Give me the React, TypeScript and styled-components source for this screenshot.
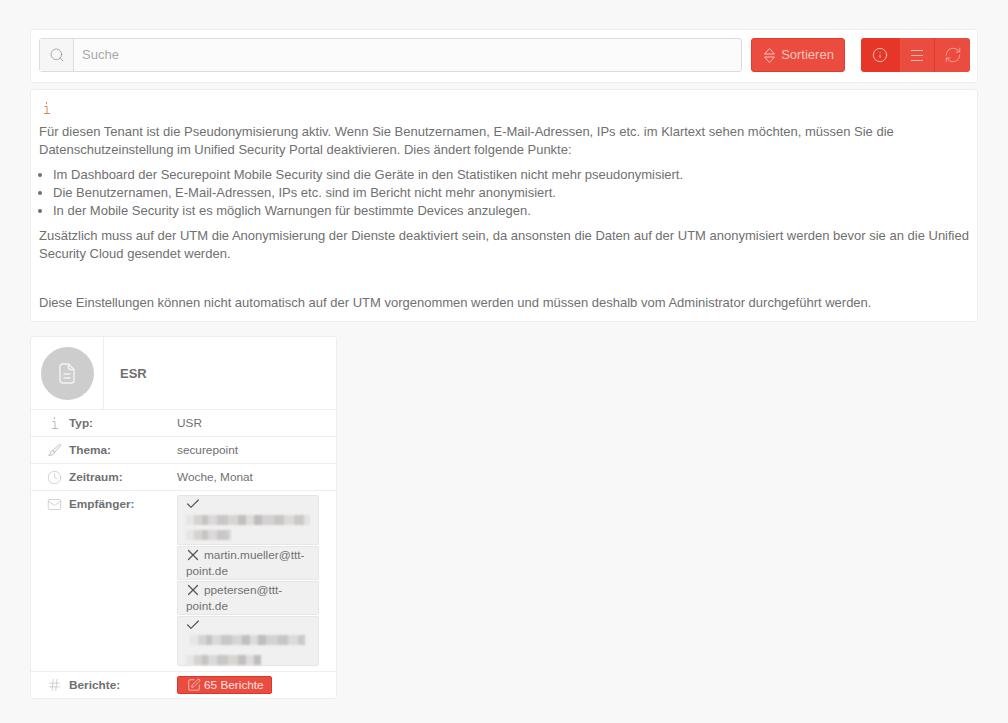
import React from "react";
import styled, { createGlobalStyle } from "styled-components";
import { Check, Clock, Hash, Info, Mail, RefreshCw, Search, SquarePen, X } from "lucide-react";

const GlobalStyle = createGlobalStyle`
  body {
    margin: 0;
    background: #f8f8f8;
    color: #707070;
    font-family: "Liberation Sans", Arial, sans-serif;
    font-size: 13px;
    line-height: 18px;
  }
`;

const Page = styled.div`
  display: flex;
  flex-direction: column;
  align-items: flex-start;
  padding: 29px 30px 23px;
`;

const Card = styled.div`
  box-sizing: border-box;
  width: 948px;
  background: #fff;
  border: 1px solid #eeeeee;
  border-radius: 3px;
`;

const Toolbar = styled(Card)`
  display: flex;
  align-items: flex-start;
  height: 54px;
  padding: 8px 7px 0 8px;
  margin-bottom: 6px;
`;

const SearchGroup = styled.div`
  flex: none;
  display: flex;
  width: 703px;
  height: 34px;
  box-sizing: border-box;
  border: 1px solid #dcdcdc;
  border-radius: 3px;
  background: #fbfbfb;
`;

const SearchAddon = styled.div`
  flex: none;
  width: 33px;
  display: flex;
  align-items: center;
  justify-content: center;
  border-right: 1px solid #dcdcdc;
  background: #f6f6f6;
  color: #8f8f8f;
`;

const SearchInput = styled.input`
  flex: 1;
  border: 0;
  background: transparent;
  padding: 0 8px;
  font: inherit;
  outline: none;
  &::placeholder {
    color: #a9a9a9;
    opacity: 1;
  }
`;

const SortButton = styled.button`
  flex: none;
  margin-left: 9px;
  width: 94px;
  height: 34px;
  display: flex;
  align-items: center;
  justify-content: center;
  gap: 6px;
  padding: 0 0 0 2px;
  border: 1px solid #e63a28;
  border-radius: 3px;
  background: #ea4c3f;
  color: #f8c4bd;
  font: inherit;
`;

const ButtonGroup = styled.div`
  flex: none;
  margin-left: 16px;
  display: flex;
  height: 34px;
  width: 109px;
  border-radius: 3px;
  overflow: hidden;
`;

const GroupButton = styled.button<{ $active?: boolean; $width: number }>`
  flex: none;
  width: ${(p) => p.$width}px;
  padding: 0;
  display: flex;
  align-items: center;
  justify-content: center;
  border: 0;
  border-left: ${(p) => (p.$active ? "0" : "1px solid #e63a28")};
  background: ${(p) => (p.$active ? "#e63627" : "#ea4c3f")};
  color: ${(p) => (p.$active ? "#fbe0dc" : "#f6b5ad")};
`;

const Notice = styled(Card)`
  padding: 8px 8px 9px;
  margin-bottom: 14px;
`;

const NoticeMark = styled.div`
  display: flex;
  align-items: flex-start;
  height: 25px;
  padding: 3px 0 0 4px;
  box-sizing: border-box;
  color: #e2824c;
`;

const Paragraph = styled.p`
  margin: 0 0 7px;
`;

const SpacedParagraph = styled(Paragraph)`
  margin-top: 31px;
  margin-bottom: 0;
`;

const BulletList = styled.ul`
  margin: 0 0 7px;
  padding-left: 14px;
`;

const ReportCard = styled(Card)`
  width: 307px;
  font-size: 11.8px;
`;

const CardHead = styled.div`
  display: flex;
  height: 72px;
`;

const AvatarCell = styled.div`
  flex: none;
  width: 72px;
  display: flex;
  align-items: center;
  justify-content: center;
  border-right: 1px solid #eeeeee;
`;

const Avatar = styled.div`
  width: 53px;
  height: 53px;
  border-radius: 50%;
  background: #cdcdcd;
  color: #f4f4f4;
  display: flex;
  align-items: center;
  justify-content: center;
`;

const CardTitle = styled.div`
  display: flex;
  align-items: center;
  padding: 1px 0 0 16px;
  font-size: 13px;
  font-weight: bold;
`;

const Row = styled.div`
  box-sizing: border-box;
  display: grid;
  grid-template-columns: 146px 1fr;
  min-height: 27px;
  padding: 4px 17px 4px 0;
  border-top: 1px solid #eeeeee;
`;

const RowLabel = styled.div`
  display: flex;
  align-items: flex-start;
  font-weight: bold;
`;

const RowIcon = styled.span`
  flex: none;
  width: 38px;
  height: 18px;
  padding: 0 7px 0 16px;
  box-sizing: border-box;
  display: flex;
  align-items: center;
  justify-content: center;
  color: #b9b9b9;
`;

const RowValue = styled.div`
  min-width: 0;
`;

const RecipientList = styled.div`
  display: flex;
  flex-direction: column;
  gap: 1px;
  margin-bottom: 1px;
`;

const Recipient = styled.div`
  box-sizing: border-box;
  padding: 0 8px;
  background: #f0f0f0;
  border: 1px solid #e6e6e6;
  border-radius: 2px;
  line-height: 16px;
`;

const StatusIcon = styled.span`
  display: inline-flex;
  align-items: center;
  justify-content: center;
  width: 20px;
  height: 12px;
  margin: 2px 1px 0 -3px;
  vertical-align: top;
  color: #555;
`;

const BlurLine = styled.div<{ $w: number; $x: number; $top: number; $bottom: number }>`
  width: ${(p) => p.$w}px;
  height: 10px;
  margin: ${(p) => p.$top}px 0 ${(p) => p.$bottom}px ${(p) => p.$x}px;
  filter: blur(1px);
  background: linear-gradient(
    90deg,
    #e8e6e4 0 8px,
    #d6d4d2 8px 16px,
    #c6c4c2 16px 22px,
    #dcdad8 22px 31px,
    #c9c7c8 31px 42px,
    #d8d6d2 42px 52px,
    #c2c0be 52px 60px,
    #dedcda 60px 68px,
    #bfbdbd 68px 76px,
    #d4d2d0 76px 88px,
    #c8c6c4 88px 98px,
    #dddbd9 98px 108px,
    #cbc9c7 108px 118px,
    #e4e2e0 118px 130px
  );
`;

const ReportsButton = styled.button`
  display: inline-flex;
  align-items: center;
  gap: 3px;
  box-sizing: border-box;
  width: 95px;
  height: 18px;
  padding: 0 0 0 9px;
  border: 1px solid #e0362a;
  border-radius: 2px;
  background: #ea4c3f;
  color: #fde4e0;
  font: inherit;
  line-height: 16px;
  vertical-align: top;
`;

const SortIcon = () => (
  <svg width="11" height="15" viewBox="0 0 11 15" fill="none" stroke="currentColor" strokeWidth="1">
    <path d="M.5 6 5.500.500l5 5.500zM.5 9l5 5.500 5-5.500z" strokeLinejoin="round" />
  </svg>
);

const LinesIcon = () => (
  <svg width="12" height="11" viewBox="0 0 12 11" fill="none" stroke="currentColor" strokeWidth="1">
    <path d="M0 .5h12M0 5.500h12M0 10.500h12" />
  </svg>
);

const SerifI = () => (
  <svg width="8" height="14" viewBox="0 0 8 14" fill="none" stroke="currentColor" strokeWidth="1">
    <path d="M3.500 1v2M1.500 5.500h2.500v7M1 12.500h6" />
  </svg>
);

const DocIcon = () => (
  <svg width="16" height="21" viewBox="0 0 16 21" fill="none" stroke="currentColor" strokeWidth="1.4">
    <path
      d="M3.500 1H9.500l5.500 5.500v11a2.500 2.500 0 0 1-2.500 2.500h-9A2.500 2.500 0 0 1 1 17.500v-14A2.500 2.500 0 0 1 3.500 1z"
      strokeLinejoin="round"
    />
    <path d="M9.500 1v3.500a2 2 0 0 0 2 2H15M4.500 11h7M4.500 15h7" />
  </svg>
);

const BrushIcon = () => (
  <svg width="14" height="14" viewBox="0 0 16 16" fill="none" stroke="currentColor" strokeWidth="1.100">
    <path d="M5.500 8.500 12.800 1.800c.9-.7 2.300.5 1.500 1.500L7.500 10.500z" strokeLinejoin="round" />
    <path d="M5.500 8.500C3.600 8.800 3.400 10.300 3 11.700c-.3 1-1 1.700-2.300 2.300 2.900.4 6-.5 6.800-3.500z" strokeLinejoin="round" />
  </svg>
);

const rows = [
  { label: "Typ:", value: "USR", icon: <SerifI /> },
  { label: "Thema:", value: "securepoint", icon: <BrushIcon /> },
  { label: "Zeitraum:", value: "Woche, Monat", icon: <Clock size={15} strokeWidth={1} /> },
];

const App = () => {
  return (
    <Page>
      <GlobalStyle />
      <Toolbar>
        <SearchGroup>
          <SearchAddon>
            <Search size={16} strokeWidth={1.1} />
          </SearchAddon>
          <SearchInput placeholder="Suche" />
        </SearchGroup>
        <SortButton>
          <SortIcon />
          Sortieren
        </SortButton>
        <ButtonGroup>
          <GroupButton $active $width={38}>
            <Info size={16} strokeWidth={1.2} />
          </GroupButton>
          <GroupButton $width={35}>
            <LinesIcon />
          </GroupButton>
          <GroupButton $width={36}>
            <RefreshCw size={18} strokeWidth={1} />
          </GroupButton>
        </ButtonGroup>
      </Toolbar>

      <Notice>
        <NoticeMark>
          <SerifI />
        </NoticeMark>
        <Paragraph>
          Für diesen Tenant ist die Pseudonymisierung aktiv. Wenn Sie Benutzernamen, E-Mail-Adressen, IPs etc. im
          Klartext sehen möchten, müssen Sie die Datenschutzeinstellung im Unified Security Portal deaktivieren. Dies
          ändert folgende Punkte:
        </Paragraph>
        <BulletList>
          <li>Im Dashboard der Securepoint Mobile Security sind die Geräte in den Statistiken nicht mehr pseudonymisiert.</li>
          <li>Die Benutzernamen, E-Mail-Adressen, IPs etc. sind im Bericht nicht mehr anonymisiert.</li>
          <li>In der Mobile Security ist es möglich Warnungen für bestimmte Devices anzulegen.</li>
        </BulletList>
        <Paragraph>
          Zusätzlich muss auf der UTM die Anonymisierung der Dienste deaktiviert sein, da ansonsten die Daten auf der
          UTM anonymisiert werden bevor sie an die Unified Security Cloud gesendet werden.
        </Paragraph>
        <SpacedParagraph>
          Diese Einstellungen können nicht automatisch auf der UTM vorgenommen werden und müssen deshalb vom
          Administrator durchgeführt werden.
        </SpacedParagraph>
      </Notice>

      <ReportCard>
        <CardHead>
          <AvatarCell>
            <Avatar>
              <DocIcon />
            </Avatar>
          </AvatarCell>
          <CardTitle>ESR</CardTitle>
        </CardHead>

        {rows.map((row) => (
          <Row key={row.label}>
            <RowLabel>
              <RowIcon>{row.icon}</RowIcon>
              {row.label}
            </RowLabel>
            <RowValue>{row.value}</RowValue>
          </Row>
        ))}

        <Row>
          <RowLabel>
            <RowIcon>
              <Mail size={15} strokeWidth={1} />
            </RowIcon>
            Empfänger:
          </RowLabel>
          <RowValue>
            <RecipientList>
              <Recipient>
                <StatusIcon>
                  <Check size={16} strokeWidth={1.8} />
                </StatusIcon>
                <BlurLine $w={124} $x={0} $top={3} $bottom={5} aria-hidden />
                <BlurLine $w={45} $x={0} $top={0} $bottom={4} aria-hidden />
              </Recipient>
              <Recipient>
                <StatusIcon>
                  <X size={18} strokeWidth={1.6} />
                </StatusIcon>
                martin.mueller@ttt-point.de
              </Recipient>
              <Recipient>
                <StatusIcon>
                  <X size={18} strokeWidth={1.6} />
                </StatusIcon>
                ppetersen@ttt-point.de
              </Recipient>
              <Recipient>
                <StatusIcon>
                  <Check size={16} strokeWidth={1.8} />
                </StatusIcon>
                <BlurLine $w={115} $x={4} $top={2} $bottom={10} aria-hidden />
                <BlurLine $w={75} $x={0} $top={0} $bottom={0} aria-hidden />
              </Recipient>
            </RecipientList>
          </RowValue>
        </Row>

        <Row>
          <RowLabel>
            <RowIcon>
              <Hash size={16} strokeWidth={1} />
            </RowIcon>
            Berichte:
          </RowLabel>
          <RowValue>
            <ReportsButton>
              <SquarePen size={14} strokeWidth={1.2} />
              65 Berichte
            </ReportsButton>
          </RowValue>
        </Row>
      </ReportCard>
    </Page>
  );
};

export default App;
